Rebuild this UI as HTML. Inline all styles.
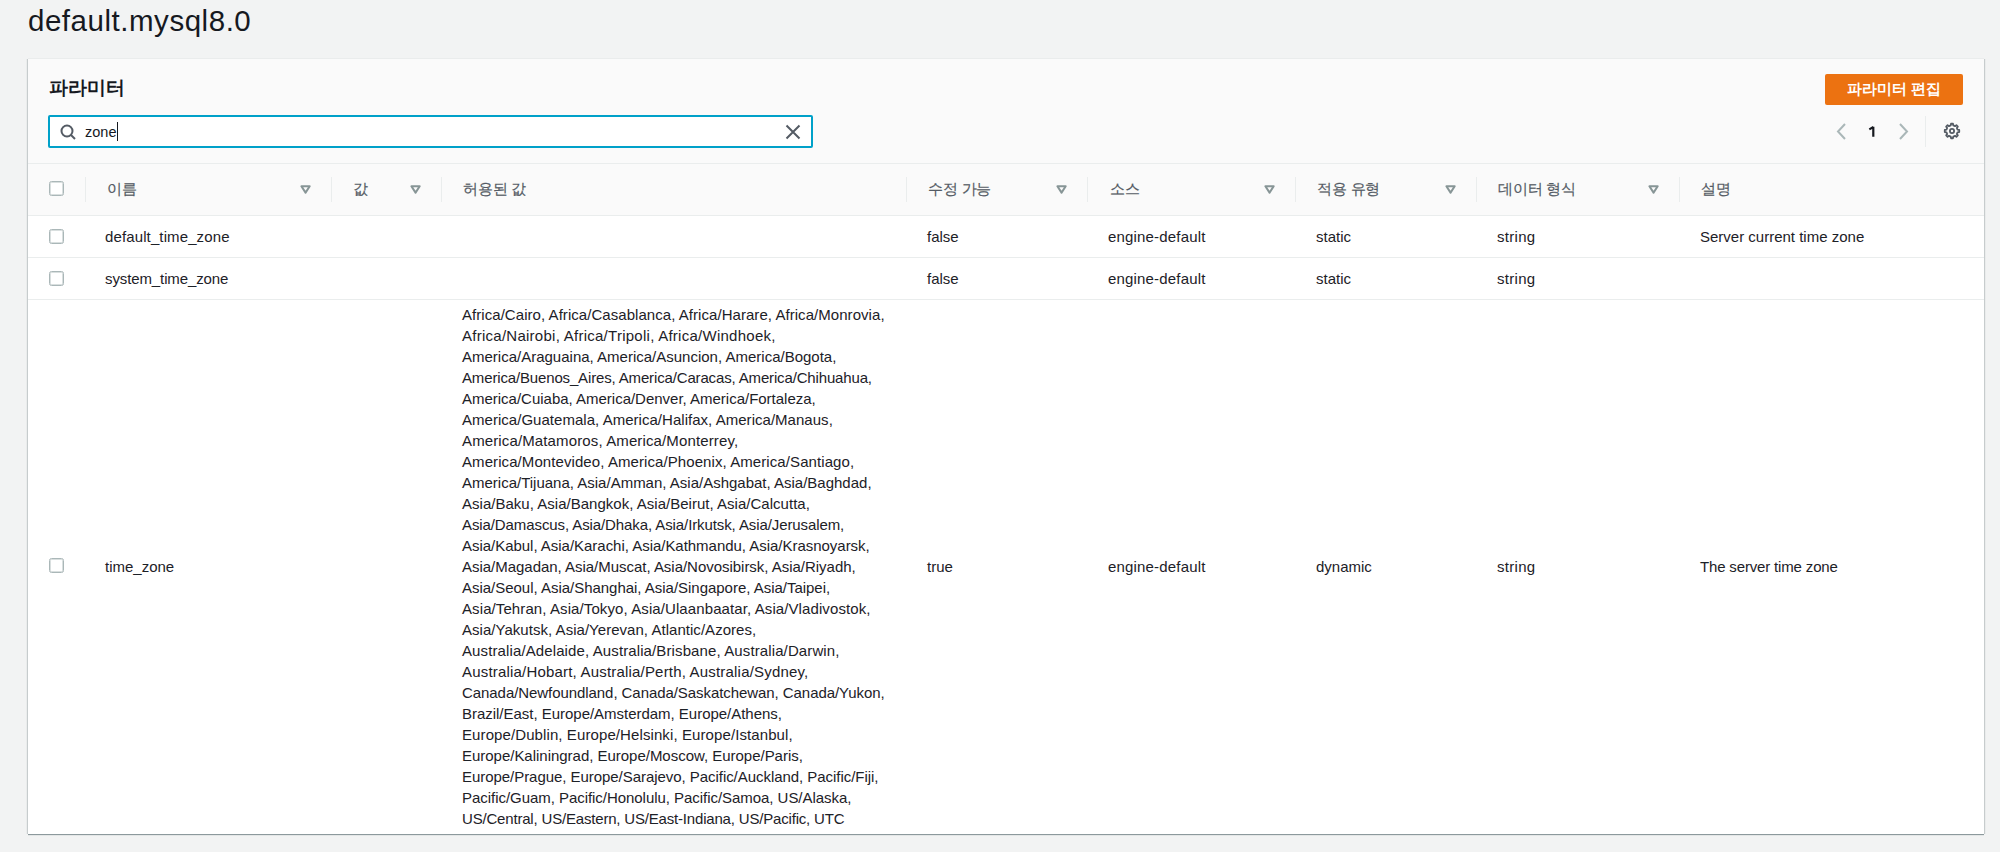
<!DOCTYPE html>
<html><head><meta charset="utf-8">
<style>
*{box-sizing:border-box;margin:0;padding:0}
html,body{width:2000px;height:852px;overflow:hidden;background:#f2f3f3;font-family:"Liberation Sans",sans-serif;color:#16191f}
.a{position:absolute;white-space:nowrap}
h1{position:absolute;left:28px;top:3px;font-size:29.5px;font-weight:400;line-height:36px;color:#16191f;letter-spacing:0.53px}
.panel{position:absolute;left:28px;top:59px;width:1956px;height:775px;background:#fff;border-top:1px solid #eaeded;box-shadow:0 1px 0 0 rgba(0,28,36,.38),0 2px 0 0 rgba(0,28,36,.06),-1px 0 0 0 rgba(0,28,36,.15),1px 0 0 0 rgba(0,28,36,.15),-2px 0 0 0 rgba(0,28,36,.03),2px 0 0 0 rgba(0,28,36,.03),0 -1px 0 0 rgba(0,28,36,.03)}
.phead{position:absolute;left:0;top:-1px;width:1956px;height:105px;background:#fafafa;border-bottom:1px solid #eaeded}
.h2{position:absolute;left:21px;top:17px;font-size:19px;font-weight:700;line-height:24px;color:#16191f;letter-spacing:0px}
.search{position:absolute;left:20px;top:56px;width:765px;height:33px;border:2px solid #00a1c9;border-radius:2px;background:#fff}
.btn{position:absolute;left:1797px;top:15px;width:138px;height:31px;background:#ec7211;border-radius:2px;color:#fff;font-weight:700;font-size:15px;line-height:29px;text-align:center}
.th{position:absolute;top:-0.5px;height:49px;line-height:49px;font-size:15px;color:#545b64;-webkit-text-stroke:0.2px #545b64;letter-spacing:-0.2px}
.div{position:absolute;top:13px;width:1px;height:25px;background:#eaeded}
.tri{position:absolute;top:21px}
.row{position:absolute;left:0;width:1956px;border-bottom:1px solid #eaeded;background:#fff}
.cb{position:absolute;width:15px;height:15px;border:1px solid #aab7b8;border-radius:2.5px;background:#fff;box-shadow:inset 0 0 0 1px rgba(170,183,184,.45)}
.ln{height:21px}
.td{position:absolute;font-size:15px;line-height:21px;color:#1d2127;white-space:nowrap}
</style></head><body>
<h1>default.mysql8.0</h1>
<div class="panel">
  <div class="phead">
    <div class="h2">파라미터</div>
    <div class="search">
      <svg class="a" style="left:10px;top:7px" width="18" height="18" viewBox="0 0 18 18"><circle cx="7" cy="7" r="5.5" fill="none" stroke="#545b64" stroke-width="2"/><line x1="11" y1="11" x2="15" y2="15" stroke="#545b64" stroke-width="2"/></svg>
      <div class="a" style="left:35px;top:5px;font-size:14.5px;line-height:20px;color:#16191f">zone</div>
      <div class="a" style="left:67px;top:5px;width:1px;height:19px;background:#16191f"></div>
      <svg class="a" style="left:735px;top:7px" width="16" height="16" viewBox="0 0 16 16"><path d="M1.5 1.5L14.5 14.5M14.5 1.5L1.5 14.5" stroke="#545b64" stroke-width="2" fill="none"/></svg>
    </div>
    <div class="btn">파라미터 편집</div>
    <svg class="a" style="left:1807px;top:64px" width="14" height="18" viewBox="0 0 14 18"><path d="M10 1L3 8.5L10 16" stroke="#aab7b8" stroke-width="2" fill="none"/></svg>
    <svg class="a" style="left:1838px;top:65px" width="12" height="16" viewBox="0 0 12 16"><path d="M7.3 2.8V12.8M3.3 5.4L7.4 3.0" stroke="#16191f" stroke-width="2.2" fill="none"/></svg>
    <svg class="a" style="left:1868px;top:64px" width="14" height="18" viewBox="0 0 14 18"><path d="M4 1L11 8.5L4 16" stroke="#aab7b8" stroke-width="2" fill="none"/></svg>
    <div class="a" style="left:1897px;top:57px;width:1px;height:31px;background:#eaeded"></div>
    <svg class="a" style="left:1915px;top:63px" width="18" height="18" viewBox="0 0 18 18"><g fill="none" stroke="#545b64" stroke-width="1.8" stroke-linejoin="round"><circle cx="9" cy="9" r="2.1"/><path d="M7.72 3.45 L7.98 1.77 L10.02 1.77 L10.28 3.45 L12.02 4.17 L13.39 3.17 L14.83 4.61 L13.83 5.98 L14.55 7.72 L16.23 7.98 L16.23 10.02 L14.55 10.28 L13.83 12.02 L14.83 13.39 L13.39 14.83 L12.02 13.83 L10.28 14.55 L10.02 16.23 L7.98 16.23 L7.72 14.55 L5.98 13.83 L4.61 14.83 L3.17 13.39 L4.17 12.02 L3.45 10.28 L1.77 10.02 L1.77 7.98 L3.45 7.72 L4.17 5.98 L3.17 4.61 L4.61 3.17 L5.98 4.17Z"/></g></svg>
  </div>
  <!-- table header -->
  <div class="a" style="left:0;top:104px;width:1956px;height:52px;background:#fafafa;border-bottom:1px solid #eaeded">
    <div class="cb" style="left:21px;top:17px"></div>
    <div class="div" style="left:57px"></div>
    <div class="th" style="left:79px">이름</div>
    <svg class="tri" style="left:272px" width="11" height="9" viewBox="0 0 11 9"><path d="M1.4 1.3h8.3L5.55 7.6z" fill="none" stroke="#879596" stroke-width="2" stroke-linejoin="round"/></svg>
    <div class="div" style="left:303px"></div>
    <div class="th" style="left:325px">값</div>
    <svg class="tri" style="left:382px" width="11" height="9" viewBox="0 0 11 9"><path d="M1.4 1.3h8.3L5.55 7.6z" fill="none" stroke="#879596" stroke-width="2" stroke-linejoin="round"/></svg>
    <div class="div" style="left:413px"></div>
    <div class="th" style="left:435px">허용된 값</div>
    <div class="div" style="left:878px"></div>
    <div class="th" style="left:900px">수정 가능</div>
    <svg class="tri" style="left:1028px" width="11" height="9" viewBox="0 0 11 9"><path d="M1.4 1.3h8.3L5.55 7.6z" fill="none" stroke="#879596" stroke-width="2" stroke-linejoin="round"/></svg>
    <div class="div" style="left:1059px"></div>
    <div class="th" style="left:1082px">소스</div>
    <svg class="tri" style="left:1236px" width="11" height="9" viewBox="0 0 11 9"><path d="M1.4 1.3h8.3L5.55 7.6z" fill="none" stroke="#879596" stroke-width="2" stroke-linejoin="round"/></svg>
    <div class="div" style="left:1267px"></div>
    <div class="th" style="left:1289px">적용 유형</div>
    <svg class="tri" style="left:1417px" width="11" height="9" viewBox="0 0 11 9"><path d="M1.4 1.3h8.3L5.55 7.6z" fill="none" stroke="#879596" stroke-width="2" stroke-linejoin="round"/></svg>
    <div class="div" style="left:1448px"></div>
    <div class="th" style="left:1470px">데이터 형식</div>
    <svg class="tri" style="left:1620px" width="11" height="9" viewBox="0 0 11 9"><path d="M1.4 1.3h8.3L5.55 7.6z" fill="none" stroke="#879596" stroke-width="2" stroke-linejoin="round"/></svg>
    <div class="div" style="left:1651px"></div>
    <div class="th" style="left:1673px">설명</div>
  </div>
  <!-- row 1 -->
  <div class="row" style="top:156px;height:42px">
    <div class="cb" style="left:21px;top:13px"></div>
    <div class="td" style="left:77px;top:10px;letter-spacing:0.12px">default_time_zone</div>
    <div class="td" style="left:899px;top:10px">false</div>
    <div class="td" style="left:1080px;top:10px;letter-spacing:0.18px">engine-default</div>
    <div class="td" style="left:1288px;top:10px">static</div>
    <div class="td" style="left:1469px;top:10px;letter-spacing:0.3px">string</div>
    <div class="td" style="left:1672px;top:10px">Server current time zone</div>
  </div>
  <div class="row" style="top:198px;height:42px">
    <div class="cb" style="left:21px;top:13px"></div>
    <div class="td" style="left:77px;top:10px;letter-spacing:-0.11px">system_time_zone</div>
    <div class="td" style="left:899px;top:10px">false</div>
    <div class="td" style="left:1080px;top:10px;letter-spacing:0.18px">engine-default</div>
    <div class="td" style="left:1288px;top:10px">static</div>
    <div class="td" style="left:1469px;top:10px;letter-spacing:0.3px">string</div>
  </div>
  <div class="row" style="top:240px;height:534px;border-bottom:0">
    <div class="cb" style="left:21px;top:258px"></div>
    <div class="td" style="left:77px;top:256px">time_zone</div>
    <div class="td" style="left:434px;top:4px"><div class="ln" style="letter-spacing:0.051px">Africa/Cairo, Africa/Casablanca, Africa/Harare, Africa/Monrovia,</div><div class="ln" style="letter-spacing:0.260px">Africa/Nairobi, Africa/Tripoli, Africa/Windhoek,</div><div class="ln" style="letter-spacing:0.000px">America/Araguaina, America/Asuncion, America/Bogota,</div><div class="ln" style="letter-spacing:-0.152px">America/Buenos_Aires, America/Caracas, America/Chihuahua,</div><div class="ln" style="letter-spacing:-0.012px">America/Cuiaba, America/Denver, America/Fortaleza,</div><div class="ln" style="letter-spacing:0.030px">America/Guatemala, America/Halifax, America/Manaus,</div><div class="ln" style="letter-spacing:0.128px">America/Matamoros, America/Monterrey,</div><div class="ln" style="letter-spacing:0.083px">America/Montevideo, America/Phoenix, America/Santiago,</div><div class="ln" style="letter-spacing:-0.002px">America/Tijuana, Asia/Amman, Asia/Ashgabat, Asia/Baghdad,</div><div class="ln" style="letter-spacing:0.020px">Asia/Baku, Asia/Bangkok, Asia/Beirut, Asia/Calcutta,</div><div class="ln" style="letter-spacing:-0.098px">Asia/Damascus, Asia/Dhaka, Asia/Irkutsk, Asia/Jerusalem,</div><div class="ln" style="letter-spacing:-0.029px">Asia/Kabul, Asia/Karachi, Asia/Kathmandu, Asia/Krasnoyarsk,</div><div class="ln" style="letter-spacing:-0.027px">Asia/Magadan, Asia/Muscat, Asia/Novosibirsk, Asia/Riyadh,</div><div class="ln" style="letter-spacing:-0.024px">Asia/Seoul, Asia/Shanghai, Asia/Singapore, Asia/Taipei,</div><div class="ln" style="letter-spacing:0.097px">Asia/Tehran, Asia/Tokyo, Asia/Ulaanbaatar, Asia/Vladivostok,</div><div class="ln" style="letter-spacing:0.035px">Asia/Yakutsk, Asia/Yerevan, Atlantic/Azores,</div><div class="ln" style="letter-spacing:0.114px">Australia/Adelaide, Australia/Brisbane, Australia/Darwin,</div><div class="ln" style="letter-spacing:0.190px">Australia/Hobart, Australia/Perth, Australia/Sydney,</div><div class="ln" style="letter-spacing:-0.065px">Canada/Newfoundland, Canada/Saskatchewan, Canada/Yukon,</div><div class="ln" style="letter-spacing:-0.023px">Brazil/East, Europe/Amsterdam, Europe/Athens,</div><div class="ln" style="letter-spacing:0.098px">Europe/Dublin, Europe/Helsinki, Europe/Istanbul,</div><div class="ln" style="letter-spacing:-0.021px">Europe/Kaliningrad, Europe/Moscow, Europe/Paris,</div><div class="ln" style="letter-spacing:-0.048px">Europe/Prague, Europe/Sarajevo, Pacific/Auckland, Pacific/Fiji,</div><div class="ln" style="letter-spacing:-0.043px">Pacific/Guam, Pacific/Honolulu, Pacific/Samoa, US/Alaska,</div><div class="ln" style="letter-spacing:-0.184px">US/Central, US/Eastern, US/East-Indiana, US/Pacific, UTC</div></div>
    <div class="td" style="left:899px;top:256px">true</div>
    <div class="td" style="left:1080px;top:256px;letter-spacing:0.18px">engine-default</div>
    <div class="td" style="left:1288px;top:256px">dynamic</div>
    <div class="td" style="left:1469px;top:256px;letter-spacing:0.3px">string</div>
    <div class="td" style="left:1672px;top:256px;letter-spacing:-0.16px">The server time zone</div>
  </div>
</div>
</body></html>
